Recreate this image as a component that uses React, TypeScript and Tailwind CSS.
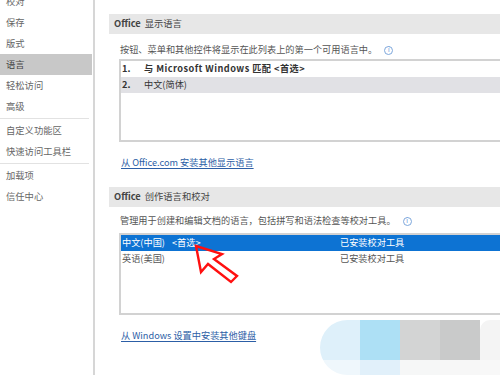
const CJK = { fontFamily: '"Noto Sans CJK SC", "Liberation Sans", sans-serif' };

const navItems: (string | null)[] = [
  "校对",
  "保存",
  "版式",
  "语言",
  "轻松访问",
  "高级",
  null,
  "自定义功能区",
  "快速访问工具栏",
  null,
  "加载项",
  "信任中心",
];

const InfoIcon = () => (
  <span className="ml-[7px] inline-flex h-[9px] w-[9px] items-center justify-center rounded-full border border-[#7da7dc] text-[6px] leading-none text-[#5b8fd6]">
    i
  </span>
);

const SectionHeader = ({ title, className }: { title: string; className: string }) => (
  <div className={`flex h-[20px] items-center bg-[#e7e7e7] pl-[5px] text-[9.3px] text-[#444] ${className}`}>
    <span className="font-bold">Office</span>
    <span className="ml-[4px]">{title}</span>
  </div>
);

const App = () => {
  return (
    <div className="relative flex h-[375px] w-[500px] overflow-hidden bg-white" style={CJK}>
      {/* left nav */}
      <div className="w-[95px] shrink-0 border-r-2 border-[#d6d6d6] pr-[1px]">
        <div className="-mt-[9px] flex flex-col">
          {navItems.map((item, i) =>
            item === null ? (
              <div key={i} className="my-[1px] mr-[3px] h-[1px] bg-[#e2e2e2]" />
            ) : (
              <div
                key={i}
                className={`flex h-[21px] items-center pl-[6px] text-[9.3px] ${
                  item === "语言" ? "bg-[#c8c8c8] text-[#444]" : "text-[#666]"
                }`}
              >
                {item}
              </div>
            )
          )}
        </div>
      </div>

      {/* main */}
      <div className="flex flex-1 flex-col pl-[14px]">
        <SectionHeader title="显示语言" className="mt-[14px] h-[19px]" />
        <div className="mt-[8px] flex h-[16px] items-center pl-[11px] text-[9.2px] text-[#555]">
          按钮、菜单和其他控件将显示在此列表上的第一个可用语言中。
          <InfoIcon />
        </div>
        <div className="ml-[10px] mt-[1px] h-[83px] border-y-2 border-l-2 border-[#d2d2d2]">
          <div className="flex h-[16px] items-center pl-[1px] text-[9.2px] font-semibold text-[#333]">
            <span className="w-[22px]">1.</span>
            <span className="tracking-[0.45px]">与 Microsoft Windows 匹配 &lt;首选&gt;</span>
          </div>
          <div className="flex h-[16px] items-center bg-[#e1e1e5] pl-[1px] text-[9.2px] text-[#333]">
            <span className="w-[22px] font-semibold">2.</span>
            <span>中文(简体)</span>
          </div>
        </div>
        <div className="mt-[13px] flex h-[16px] items-center pl-[12px]">
          <span className="text-[9.2px] text-[#2c5ea6] underline underline-offset-2">从 Office.com 安装其他显示语言</span>
        </div>

        <SectionHeader title="创作语言和校对" className="mt-[16px]" />
        <div className="mt-[6px] flex h-[16px] items-center pl-[11px] text-[9.2px] text-[#555]">
          管理用于创建和编辑文档的语言，包括拼写和语法检查等校对工具。
          <InfoIcon />
        </div>
        <div className="ml-[10px] mt-[4px] h-[82px] border-y-2 border-l-2 border-[#d2d2d2]">
          <div className="grid h-[16px] grid-cols-[218px_1fr] items-center bg-[#0d73d3] pl-[1px] text-[9.2px] text-white">
            <span>
              中文(中国)<span className="ml-[7px]">&lt;首选&gt;</span>
            </span>
            <span>已安装校对工具</span>
          </div>
          <div className="grid h-[16px] grid-cols-[218px_1fr] items-center pl-[1px] text-[9.2px] text-[#555]">
            <span>英语(美国)</span>
            <span>已安装校对工具</span>
          </div>
        </div>
        <div className="mt-[13px] flex h-[16px] items-center pl-[12px]">
          <span className="text-[9.2px] text-[#2c5ea6] underline underline-offset-2">从 Windows 设置中安装其他键盘</span>
        </div>
      </div>

      {/* red arrow annotation */}
      <svg className="absolute left-[185px] top-[238px]" width="60" height="50" viewBox="185 238 60 50">
        <polygon
          points="196,246 222,254 214,259 237,276 231,282 208,264 201,272"
          fill="none"
          stroke="#ff1010"
          strokeWidth="2.4"
          strokeLinejoin="miter"
        />
      </svg>

      {/* blurred watermark */}
      <div className="absolute left-[320px] top-[320px] flex h-[55px] w-[180px] flex-col overflow-hidden rounded-l-[30px]">
        <div className="flex h-[40px]">
          <div className="w-[40px] bg-[#def0fa]" />
          <div className="w-[40px] bg-[#ade0f5]" />
          <div className="w-[40px] bg-[#d3d4d4]" />
          <div className="w-[40px] bg-[#c9caca]" />
          <div className="w-[20px] rounded-tl-[10px] bg-[#f4f4f4]" />
        </div>
        <div className="flex h-[15px]">
          <div className="w-[40px] bg-[#eff7fc]" />
          <div className="w-[40px] bg-[#e1f0fa]" />
          <div className="w-[40px] bg-[#f6f7f7]" />
          <div className="w-[40px] bg-[#f7f7f7]" />
          <div className="w-[20px] bg-[#f8f8f8]" />
        </div>
      </div>
    </div>
  );
};

export default App;
